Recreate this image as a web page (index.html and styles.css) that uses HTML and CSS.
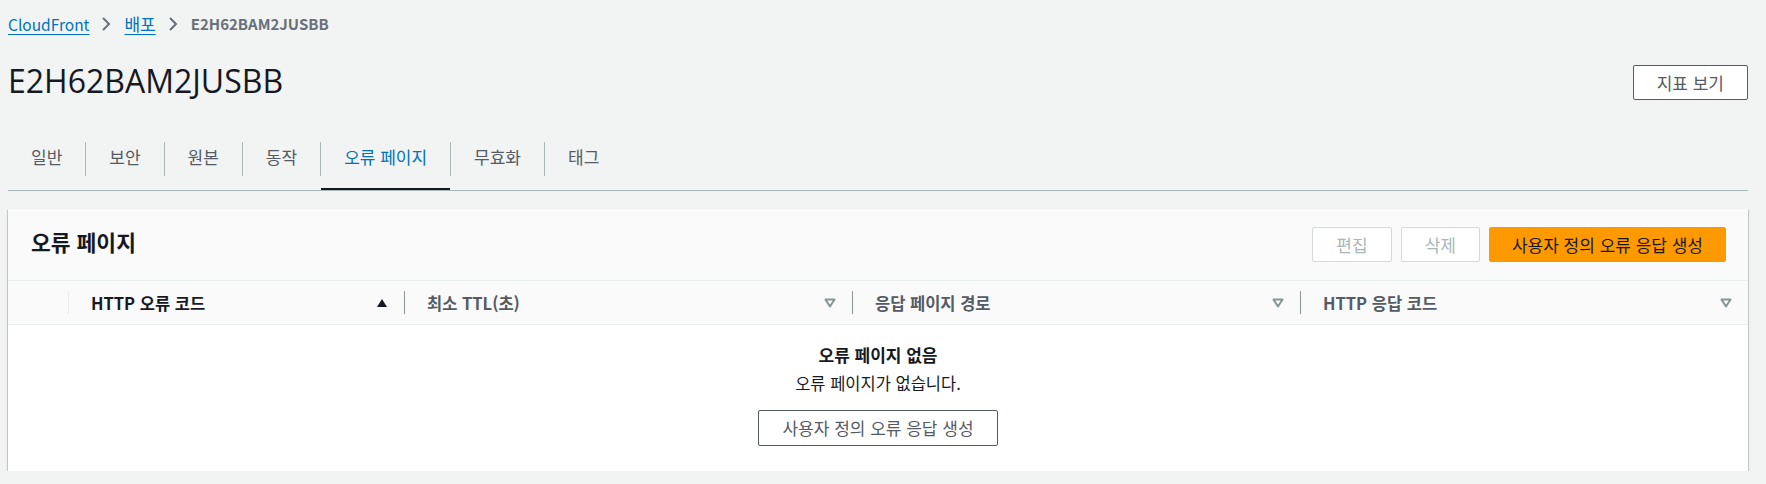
FILE: index.html
```html
<!DOCTYPE html>
<html lang="ko">
<head>
<meta charset="utf-8">
<title>E2H62BAM2JUSBB</title>
<link rel="stylesheet" href="styles.css">
</head>
<body>
<div class="page">
  <nav class="crumbs">
    <a class="crumb-link" href="#">CloudFront</a>
    <svg class="chev" viewBox="0 0 10 14"><path d="M2 1 L8 7 L2 13" /></svg>
    <a class="crumb-link crumb-ko" href="#">배포</a>
    <svg class="chev" viewBox="0 0 10 14"><path d="M2 1 L8 7 L2 13" /></svg>
    <span class="crumb-current">E2H62BAM2JUSBB</span>
  </nav>

  <div class="header">
    <h1 class="title">E2H62BAM2JUSBB</h1>
    <button class="btn btn-metrics">지표 보기</button>
  </div>

  <div class="tabs">
    <div class="tab">일반</div><span class="tab-sep"></span>
    <div class="tab">보안</div><span class="tab-sep"></span>
    <div class="tab">원본</div><span class="tab-sep"></span>
    <div class="tab">동작</div><span class="tab-sep"></span>
    <div class="tab active">오류 페이지</div><span class="tab-sep"></span>
    <div class="tab">무효화</div><span class="tab-sep"></span>
    <div class="tab">태그</div>
  </div>

  <section class="card">
    <div class="card-head">
      <h2 class="card-title">오류 페이지</h2>
      <div class="actions">
        <button class="btn btn-disabled">편집</button>
        <button class="btn btn-disabled">삭제</button>
        <button class="btn btn-primary">사용자 정의 오류 응답 생성</button>
      </div>
    </div>

    <div class="thead">
      <div class="th th-select"></div>
      <div class="th">
        <div class="th-inner th-first sorted">
          <span>HTTP 오류 코드</span>
          <svg class="sort" viewBox="0 0 12 10"><polygon class="sort-up" points="1,9 11,9 6,1" /></svg>
        </div>
      </div>
      <div class="th">
        <div class="th-inner">
          <span>최소 TTL(초)</span>
          <svg class="sort" viewBox="0 0 12 10"><polygon class="sort-down" points="1.5,1.5 10.5,1.5 6,8.5" /></svg>
        </div>
      </div>
      <div class="th">
        <div class="th-inner">
          <span>응답 페이지 경로</span>
          <svg class="sort" viewBox="0 0 12 10"><polygon class="sort-down" points="1.5,1.5 10.5,1.5 6,8.5" /></svg>
        </div>
      </div>
      <div class="th">
        <div class="th-inner">
          <span>HTTP 응답 코드</span>
          <svg class="sort" viewBox="0 0 12 10"><polygon class="sort-down" points="1.5,1.5 10.5,1.5 6,8.5" /></svg>
        </div>
      </div>
    </div>

    <div class="empty">
      <div class="empty-title">오류 페이지 없음</div>
      <div class="empty-text">오류 페이지가 없습니다.</div>
      <button class="btn btn-empty">사용자 정의 오류 응답 생성</button>
    </div>
  </section>
</div>
</body>
</html>
```

FILE: styles.css
```css
body {
  margin: 0;
  background: #f2f3f3;
  font-family: "Noto Sans CJK KR", "Noto Sans", sans-serif;
  color: #16191f;
}

.page {
  padding: 14px 18px 0 8px;
}

/* Breadcrumbs */
.crumbs {
  display: flex;
  align-items: center;
  height: 20px;
  font-size: 15.5px;
  line-height: 20px;
}

.crumb-link {
  color: #0073bb;
  text-decoration: underline;
  text-underline-offset: 3px;
}

.crumb-ko {
  font-size: 17px;
}

.chev {
  width: 10px;
  height: 14px;
  margin: 0 13px 0 12px;
}

.chev path {
  fill: none;
  stroke: #687078;
  stroke-width: 2;
}

.crumb-current {
  color: #687078;
  font-weight: 700;
  font-size: 15px;
}

/* Header */
.header {
  display: flex;
  justify-content: space-between;
  align-items: flex-start;
  margin-top: 29px;
}

.title {
  margin: 0;
  font-family: "Open Sans", sans-serif;
  font-weight: 400;
  font-size: 32px;
  line-height: 36px;
  color: #16191f;
}

/* Buttons */
.btn {
  font-family: inherit;
  font-size: 17px;
  line-height: 21px;
  padding: 6px 23px;
  border: 1px solid #545b64;
  border-radius: 2px;
  background: #fff;
  color: #545b64;
  cursor: pointer;
}

.btn-metrics {
  margin-top: 2px;
}

.btn-disabled {
  border-color: #d5dbdb;
  color: #aab7b8;
}

.btn-primary {
  padding: 6px 22px;
  background: #ff9900;
  border-color: #ff9900;
  color: #16191f;
}

/* Tabs */
.tabs {
  display: flex;
  align-items: center;
  margin-top: 28px;
  border-bottom: 1px solid #aab7b8;
}

.tab {
  padding: 19px 23px 23px;
  font-size: 17px;
  line-height: 20px;
  color: #545b64;
}

.tab.active {
  color: #0073bb;
  box-shadow: inset 0 -2px 0 #16191f;
}

.tab-sep {
  width: 1px;
  height: 34px;
  background: #aab7b8;
}

/* Card */
.card {
  margin-top: 18px;
  background: #fff;
  box-shadow: 0 1px 1px 0 rgba(0, 28, 36, 0.3),
              1px 1px 1px 0 rgba(0, 28, 36, 0.15),
              -1px 1px 1px 0 rgba(0, 28, 36, 0.15);
}

.card-head {
  display: flex;
  justify-content: space-between;
  align-items: flex-start;
  padding: 18px 22px 18px 23px;
  background: #fafafa;
  border-bottom: 1px solid #eaeded;
}

.card-title {
  margin: 0;
  font-size: 21.5px;
  line-height: 30px;
  font-weight: 700;
}

.actions {
  display: flex;
  gap: 9px;
}

/* Table header */
.thead {
  display: grid;
  grid-template-columns: 60px 336px 1fr 1fr 1fr;
  height: 43px;
  background: #fafafa;
  border-bottom: 1px solid #eaeded;
}

.th {
  display: flex;
  align-items: center;
}

.th-inner {
  flex: 1;
  display: flex;
  justify-content: space-between;
  align-items: center;
  height: 23px;
  padding: 0 16px 0 22px;
  border-left: 1px solid #879596;
  font-size: 16.5px;
  font-weight: 700;
  color: #545b64;
}

.th-first {
  border-left-color: #eaeded;
}

.th-inner.sorted {
  color: #16191f;
}

.sort {
  width: 12px;
  height: 10px;
}

.sort-up {
  fill: #16191f;
}

.sort-down {
  fill: none;
  stroke: #879596;
  stroke-width: 2;
  stroke-linejoin: round;
}

/* Empty state */
.empty {
  display: flex;
  flex-direction: column;
  align-items: center;
  padding: 19px 0 25px;
  text-align: center;
}

.empty-title {
  font-size: 17px;
  line-height: 22px;
  font-weight: 700;
}

.empty-text {
  margin-top: 6px;
  font-size: 16.5px;
  line-height: 22px;
}

.btn-empty {
  margin-top: 16px;
  line-height: 22px;
}
```
